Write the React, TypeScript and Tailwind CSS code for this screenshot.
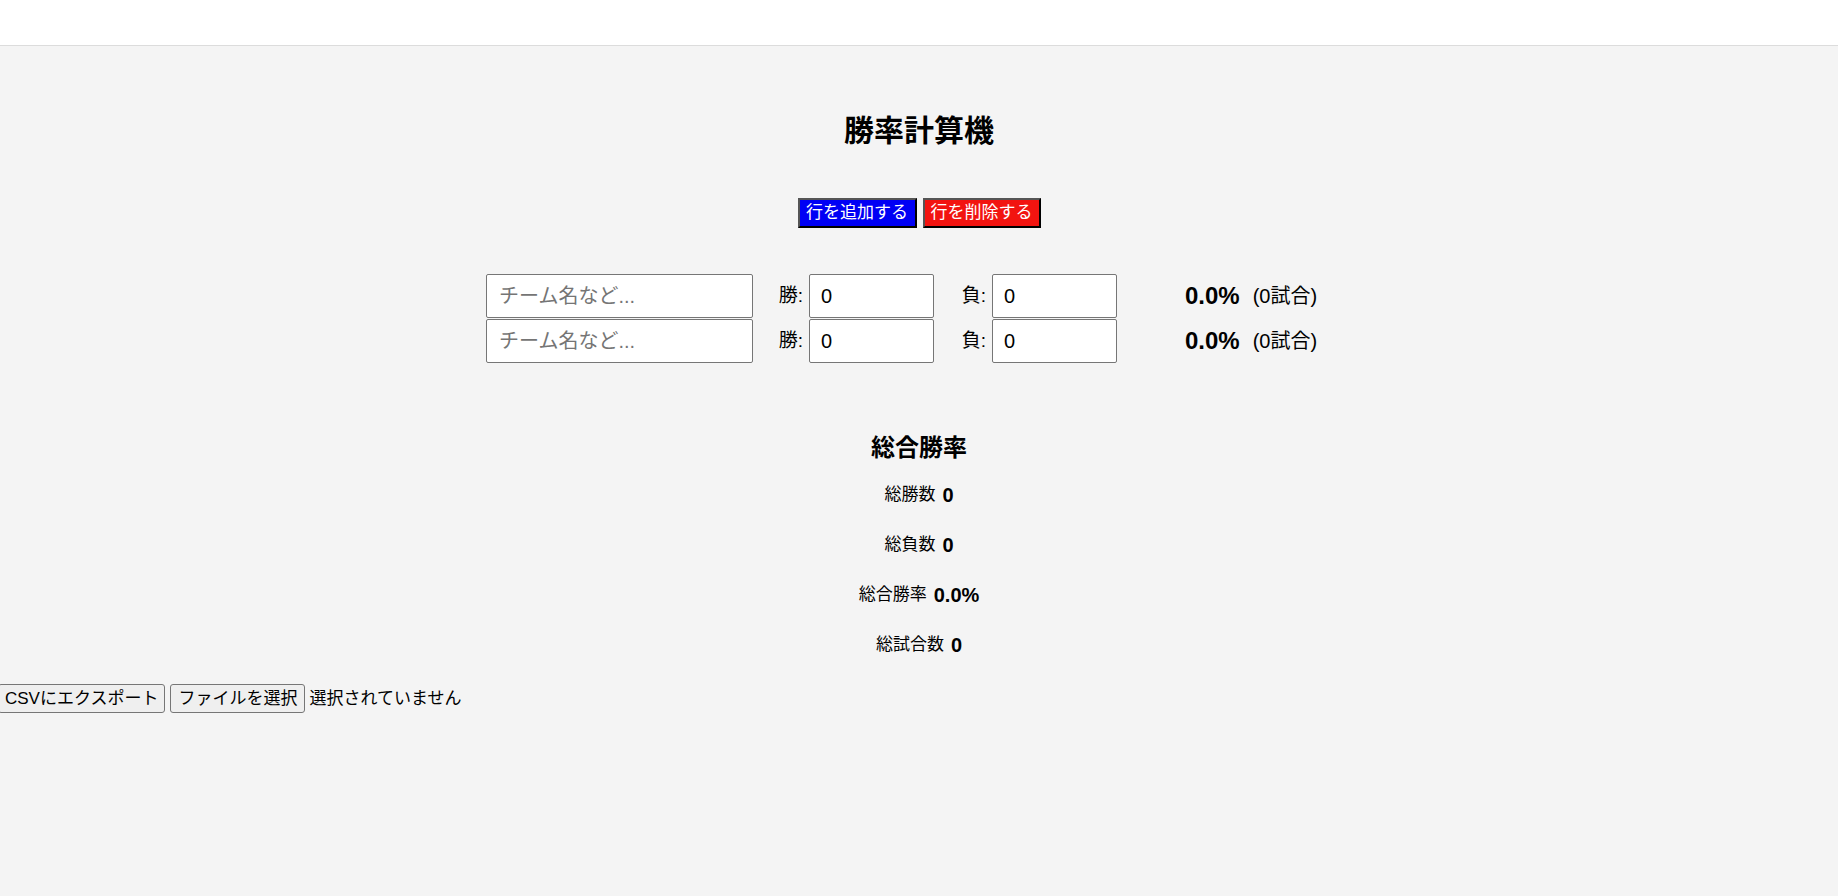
import React from "react";

const font = "font-['Liberation_Sans','Noto_Sans_CJK_JP',sans-serif]";

function Row() {
  return (
    <div className="flex items-center w-[866px]">
      <input
        className="w-[267px] h-[44px] bg-white border border-[#767676] rounded-[2px] pl-[12px] text-[20px] text-black placeholder:text-[#757575] outline-none"
        placeholder="チーム名など..."
        readOnly
      />
      <span className="w-[56px] text-right pr-[6px] text-[19px] text-black">勝:</span>
      <input
        className="w-[125px] h-[44px] bg-white border border-[#767676] rounded-[2px] pl-[11px] text-[20px] text-black outline-none"
        value="0"
        readOnly
      />
      <span className="w-[58px] text-right pr-[6px] text-[19px] text-black">負:</span>
      <input
        className="w-[125px] h-[44px] bg-white border border-[#767676] rounded-[2px] pl-[11px] text-[20px] text-black outline-none"
        value="0"
        readOnly
      />
      <span className="ml-[68px] text-[24px] font-bold text-black">0.0%</span>
      <span className="ml-[13px] text-[20px] text-black">(0試合)</span>
    </div>
  );
}

function Stat({ label, value }: { label: string; value: string }) {
  return (
    <div className="h-[50px] flex items-center gap-[7px]">
      <span className="text-[17px] text-black">{label}</span>
      <span className="text-[20px] font-bold text-black">{value}</span>
    </div>
  );
}

export default function App() {
  return (
    <div className={`min-h-screen bg-[#f4f4f4] ${font} overflow-hidden`}>
      <header className="h-[46px] bg-white border-b border-[#dcdcdc]" />
      <main className="flex flex-col items-center">
        <h1 className="mt-[67px] text-[30px] leading-[36px] font-bold text-black">勝率計算機</h1>
        <div className="mt-[49px] flex gap-[6px]">
          <button className="w-[119px] h-[30px] bg-[#0000f5] text-white text-[17px] border-2 border-t-[#555] border-l-[#555] border-r-black border-b-black">
            行を追加する
          </button>
          <button className="w-[118px] h-[30px] bg-[#f21410] text-white text-[17px] border-2 border-t-[#555] border-l-[#555] border-r-black border-b-black">
            行を削除する
          </button>
        </div>
        <div className="mt-[46px] flex flex-col gap-[1px]">
          <Row />
          <Row />
        </div>
        <h2 className="mt-[69px] text-[24px] leading-[32px] font-bold text-black">総合勝率</h2>
        <div className="mt-[6px] flex flex-col items-center">
          <Stat label="総勝数" value="0" />
          <Stat label="総負数" value="0" />
          <Stat label="総合勝率" value="0.0%" />
          <Stat label="総試合数" value="0" />
        </div>
      </main>
      <div className="mt-[14px] flex items-center -ml-[2px]">
        <button className="h-[29px] px-[6px] bg-[#efefef] border border-[#767676] rounded-[3px] text-[17px] text-black">
          CSVにエクスポート
        </button>
        <button className="ml-[5px] h-[29px] px-[7px] bg-[#efefef] border border-[#767676] rounded-[3px] text-[17px] text-black">
          ファイルを選択
        </button>
        <span className="ml-[4px] text-[17px] text-black">選択されていません</span>
      </div>
    </div>
  );
}
